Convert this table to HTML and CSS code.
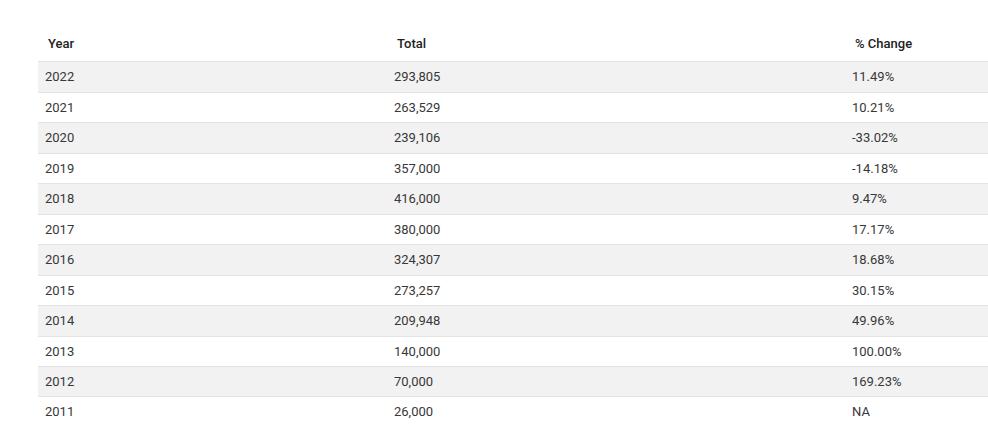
FILE: index.html
```html
<!DOCTYPE html>
<html lang="en">
<head>
<meta charset="utf-8">
<title>Totals by Year</title>
<link rel="stylesheet" href="styles.css">
</head>
<body>
<div class="wrap">
<table class="data">
  <colgroup>
    <col class="c-year">
    <col class="c-total">
    <col class="c-change">
  </colgroup>
  <thead>
    <tr><th>Year</th><th>Total</th><th>% Change</th></tr>
  </thead>
  <tbody>
    <tr><td>2022</td><td>293,805</td><td>11.49%</td></tr>
    <tr><td>2021</td><td>263,529</td><td>10.21%</td></tr>
    <tr><td>2020</td><td>239,106</td><td>-33.02%</td></tr>
    <tr><td>2019</td><td>357,000</td><td>-14.18%</td></tr>
    <tr><td>2018</td><td>416,000</td><td>9.47%</td></tr>
    <tr><td>2017</td><td>380,000</td><td>17.17%</td></tr>
    <tr><td>2016</td><td>324,307</td><td>18.68%</td></tr>
    <tr><td>2015</td><td>273,257</td><td>30.15%</td></tr>
    <tr><td>2014</td><td>209,948</td><td>49.96%</td></tr>
    <tr><td>2013</td><td>140,000</td><td>100.00%</td></tr>
    <tr><td>2012</td><td>70,000</td><td>169.23%</td></tr>
    <tr><td>2011</td><td>26,000</td><td>NA</td></tr>
  </tbody>
</table>
</div>
</body>
</html>
```
FILE: styles.css
```css
html, body {
  margin: 0;
  padding: 0;
  background: #ffffff;
}
body {
  font-family: Roboto, "Liberation Sans", Arial, sans-serif;
  color: #333333;
  overflow: hidden;
}
.wrap {
  padding: 29px 0 0 38px;
}
.data {
  border-collapse: collapse;
  width: 960px;
  table-layout: fixed;
  font-size: 13px;
}
.c-year { width: 349px; }
.c-total { width: 458px; }
.data th {
  text-align: left;
  font-weight: 500;
  color: #222222;
  line-height: 19.45px;
  padding: 5px 7px 8px 10px;
}
.data td {
  line-height: 19.45px;
  padding: 5px 7px;
  border-top: 1px solid #e3e3e3;
  color: #383838;
}
.data tbody tr:nth-child(odd) td {
  background: #f2f2f2;
}
```
